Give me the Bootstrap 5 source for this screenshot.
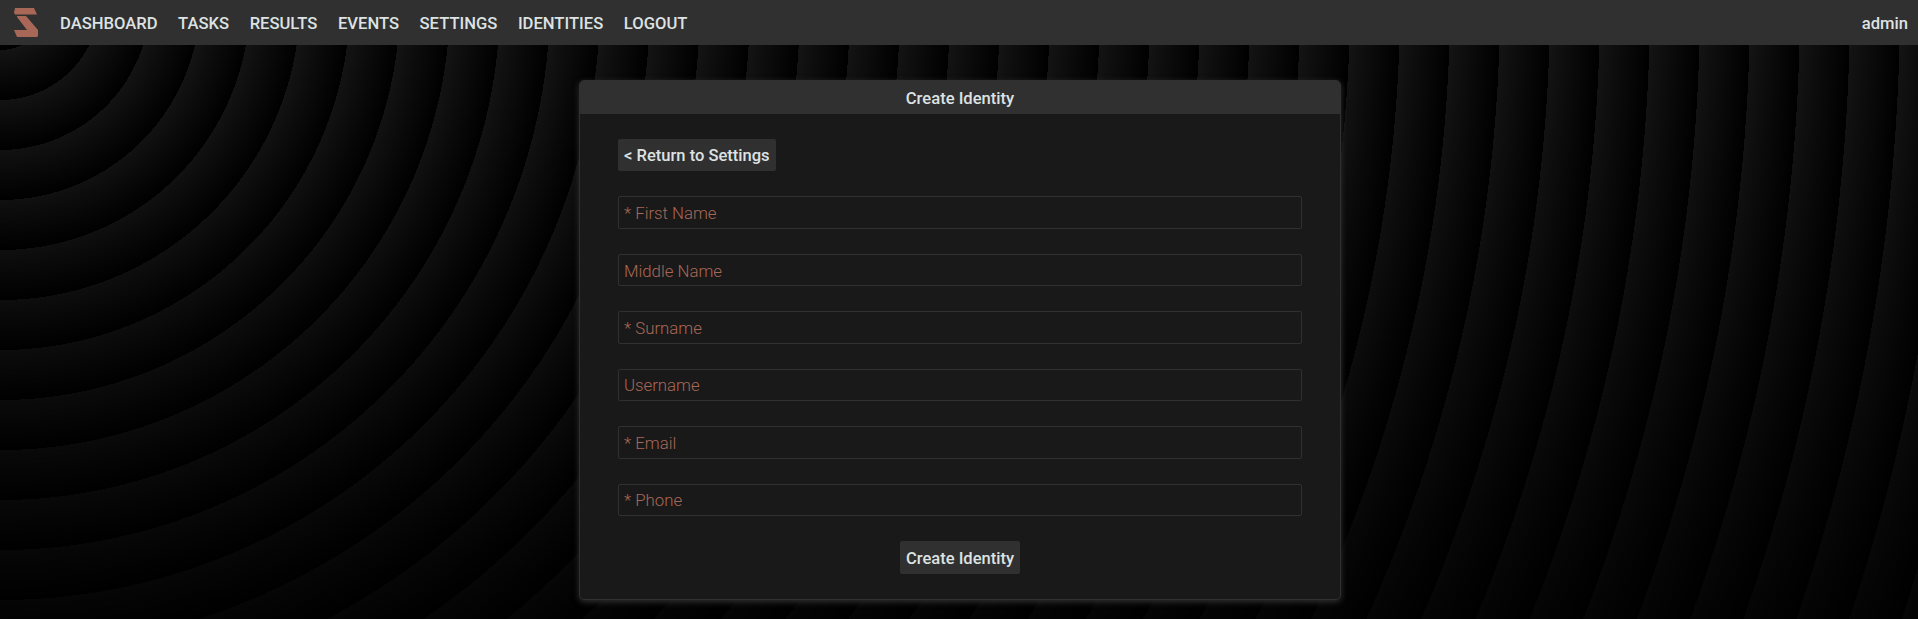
<!DOCTYPE html>
<html lang="en">
<head>
<meta charset="utf-8">
<meta name="viewport" content="width=device-width, initial-scale=1">
<title>Create Identity</title>
<link href="https://cdn.jsdelivr.net/npm/bootstrap@5.3.0/dist/css/bootstrap.min.css" rel="stylesheet">
<style>
html { height: 100%; overflow: hidden; }
body {
  min-height: 100%; font-family: Roboto, sans-serif; font-size: 16.6px; line-height: 19px; color: #dde2e3;
  background: repeating-radial-gradient(circle at 0 0, transparent 0, #000 50px), linear-gradient(#151515, #050505) #000;
}
.topbar { height: 45px; background: #303030; padding: 2px 10px 0 14px; font-weight: 500; }
.topbar svg { margin-top: -2px; }
.topbar .nav-link { color: inherit; padding: 0; }
.topbar .navbar-nav { gap: 20.6px; margin-left: 22px; }
.page-main { padding: 35px 0 0 2px; }
.identity-card { width: 762px; background: #191919; border: 1px solid #303030; border-radius: 5px; box-shadow: 0 2px 6px 0 #303030; color: inherit; }
.identity-card .card-header { background: #303030; border: 0; padding: 8px 0 6px; height: 33px; font-weight: 500; border-radius: 4px 4px 0 0; }
.identity-card .card-body { padding: 25px 38px; gap: 25px; }
.btn-grey { background: #303030; color: #dde2e3; border: 0; border-radius: 2px; padding: 1.5px 6px 0; height: 32.45px; font-size: 16.55px; font-weight: 500; line-height: 19px; }
.field { background: transparent; border: 1px solid #303030; border-radius: 2px; padding: 1px 5px 0; height: 32.45px; font-size: 16.8px; line-height: 19px; color: #dde2e3; }
.field::placeholder { color: #a96857; font-weight: 300; opacity: 1; }
</style>
</head>
<body>
<nav class="topbar d-flex align-items-center">
  <svg width="24" height="29" viewBox="0 0 24 29" fill="#a96857" aria-hidden="true"><path d="M1 0H20L23 6.500H1L0 4.500ZM3 8H12L24 22V28L23 29H3L0 22H13L3 9Z"/></svg>
  <div class="navbar-nav flex-row">
    <a class="nav-link" href="#">DASHBOARD</a>
    <a class="nav-link" href="#">TASKS</a>
    <a class="nav-link" href="#">RESULTS</a>
    <a class="nav-link" href="#">EVENTS</a>
    <a class="nav-link" href="#">SETTINGS</a>
    <a class="nav-link" href="#">IDENTITIES</a>
    <a class="nav-link" href="#">LOGOUT</a>
  </div>
  <span class="ms-auto">admin</span>
</nav>
<main class="page-main">
  <div class="card identity-card mx-auto">
    <div class="card-header text-center">Create Identity</div>
    <form class="card-body d-flex flex-column">
      <button type="button" class="btn btn-grey align-self-start">&lt; Return to Settings</button>
      <input class="form-control field" placeholder="* First Name">
      <input class="form-control field" placeholder="Middle Name">
      <input class="form-control field" placeholder="* Surname">
      <input class="form-control field" placeholder="Username">
      <input class="form-control field" placeholder="* Email">
      <input class="form-control field" placeholder="* Phone">
      <button type="button" class="btn btn-grey align-self-center">Create Identity</button>
    </form>
  </div>
</main>
<script src="https://cdn.jsdelivr.net/npm/bootstrap@5.3.0/dist/js/bootstrap.bundle.min.js"></script>
</body>
</html>
